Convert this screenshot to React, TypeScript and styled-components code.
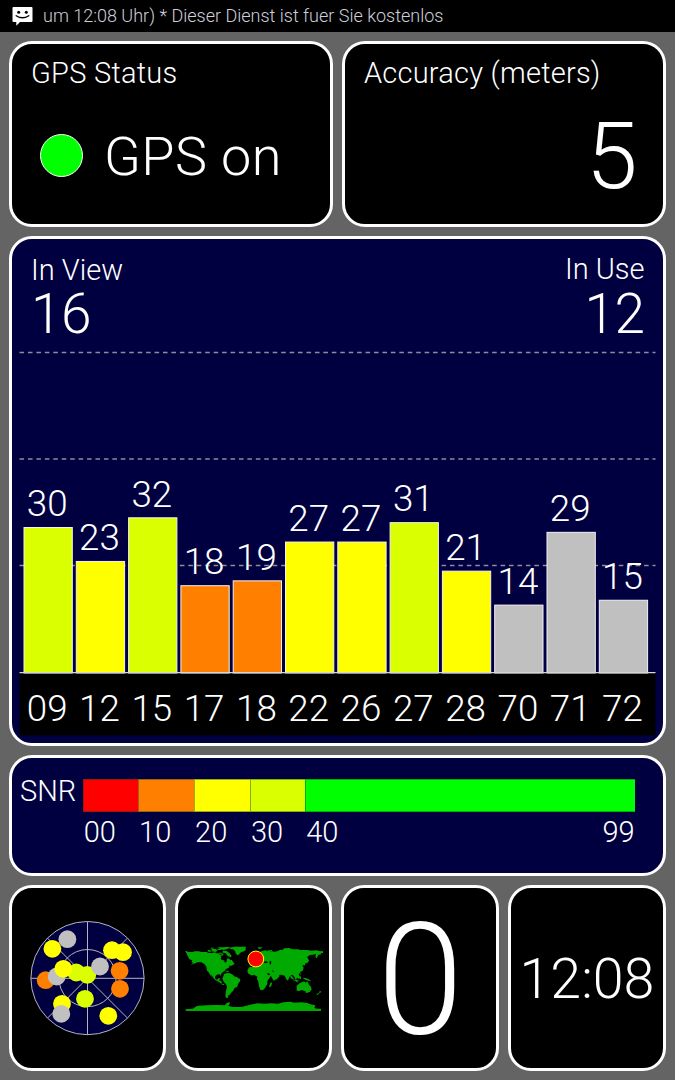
import React from "react";
import styled, { createGlobalStyle } from "styled-components";

const GlobalStyle = createGlobalStyle`
  * { box-sizing: border-box; }
  body {
    margin: 0;
    background: #646464;
    color: #fff;
    font-family: Roboto, "Liberation Sans", sans-serif;
    font-weight: 300;
  }
`;

const Screen = styled.div`
  width: 675px;
  height: 1080px;
  display: flex;
  flex-direction: column;
  overflow: hidden;
`;

const StatusBar = styled.header`
  height: 32px;
  flex: none;
  display: flex;
  align-items: center;
  gap: 10px;
  padding-left: 12px;
  background: #000;
  color: #cfcfdc;
  font-size: 18px;
  font-weight: 300;
  line-height: 32px;
  white-space: pre;
`;

const Dashboard = styled.main`
  flex: 1;
  display: grid;
  grid-template-rows: 186px 510px 121px 186px;
  gap: 9px;
  padding: 9px 9px 0 9px;
`;

const Row = styled.div<{ $columns: string }>`
  display: grid;
  grid-template-columns: ${(p) => p.$columns};
  gap: 9px;
`;

const Panel = styled.section<{ $tone?: "navy" | "black" }>`
  display: flex;
  flex-direction: column;
  overflow: hidden;
  border: 3px solid #fff;
  border-radius: 23px;
  background: ${(p) => (p.$tone === "navy" ? "#000040" : "#000")};
`;

const CenteredPanel = styled(Panel)<{ $drop?: number }>`
  align-items: center;
  justify-content: center;
  padding-top: ${(p) => p.$drop ?? 0}px;
`;

const Title = styled.h2<{ $spacing?: number }>`
  margin: 0;
  font-size: 29px;
  line-height: 28px;
  font-weight: 300;
  letter-spacing: ${(p) => p.$spacing ?? 0}px;
  white-space: nowrap;
`;

const StatusPanel = styled(Panel)`
  padding: 15px 19px 0;
`;

const FixRow = styled.div`
  display: flex;
  align-items: center;
  gap: 21px;
  margin-top: 41px;
  padding-left: 9px;
`;

const Lamp = styled.span`
  width: 43px;
  height: 43px;
  margin-bottom: 1px;
  border: 1.5px solid #fff;
  border-radius: 50%;
  background: #0f0;
`;

const Value = styled.div<{ $size: number; $spacing?: number }>`
  font-size: ${(p) => p.$size}px;
  line-height: ${(p) => p.$size}px;
  letter-spacing: ${(p) => p.$spacing ?? 0}px;
  white-space: nowrap;
`;

const FixValue = styled(Value)`
  padding-top: 2px;
`;

const Accuracy = styled(Value)`
  align-self: flex-end;
  margin: 23px 6.5px 0 0;
`;

const ChartHeader = styled.div`
  height: 110px;
  flex: none;
  display: flex;
  justify-content: space-between;
  padding: 17px 18.5px 0 19px;
`;

const Count = styled.div<{ $end?: boolean }>`
  display: flex;
  flex-direction: column;
  align-items: ${(p) => (p.$end ? "flex-end" : "flex-start")};
  gap: ${(p) => (p.$end ? 4 : 3)}px;
  margin-top: ${(p) => (p.$end ? -1 : 0)}px;
`;

const Chart = styled.svg`
  display: block;
  flex: none;
`;

const SnrPanel = styled(Panel)`
  flex-direction: row;
  padding: 21px 28.4px 0 8px;
  gap: 6px;
`;

const SnrTitle = styled(Title)`
  width: 57px;
  margin-top: -2px;
`;

const SnrScale = styled.div`
  flex: 1;
  display: grid;
  grid-template-columns: 55.4px 56px 55.8px 55.3px 1fr;
  grid-template-rows: 33px 34px;
  row-gap: 3px;
`;

const Swatch = styled.div<{ $color: string }>`
  background: ${(p) => p.$color};
  border: solid rgba(0, 60, 40, 0.4);
  border-width: 1px 0 1px 1px;
`;

const Tick = styled.div`
  display: flex;
  justify-content: space-between;
  padding-left: 0.7px;
  font-size: 29px;
  line-height: 34px;
`;

const ORANGE = "#ff8000";
const YELLOW = "#ffff00";
const LIME = "#d9ff00";
const GREEN = "#00ff00";
const GREY = "#c0c0c0";
const RED = "#ff0000";

const satellites = [
  { id: "09", snr: 30, color: LIME },
  { id: "12", snr: 23, color: YELLOW },
  { id: "15", snr: 32, color: LIME },
  { id: "17", snr: 18, color: ORANGE },
  { id: "18", snr: 19, color: ORANGE },
  { id: "22", snr: 27, color: YELLOW },
  { id: "26", snr: 27, color: YELLOW },
  { id: "27", snr: 31, color: LIME },
  { id: "28", snr: 21, color: YELLOW },
  { id: "70", snr: 14, color: GREY },
  { id: "71", snr: 29, color: GREY },
  { id: "72", snr: 15, color: GREY },
];

const scale = [
  { color: RED, from: "00" },
  { color: ORANGE, from: "10" },
  { color: YELLOW, from: "20" },
  { color: LIME, from: "30" },
  { color: GREEN, from: "40", to: "99" },
];

const BASE = 323.5;
const PITCH = 52.3;
const UNIT = 4.85;

function SignalChart() {
  return (
    <Chart width="651" height="394" viewBox="0 0 651 394">
      <rect x="7.5" y={BASE} width="636" height="63" fill="#000" />
      {[3.5, 110, 216.5].map((y) => (
        <line key={y} x1="7.5" x2="643.5" y1={y} y2={y} stroke="#8c8c9c" strokeWidth="1.5" strokeDasharray="4.6 3.84" />
      ))}
      {satellites.map((s, i) => {
        const x = 11.8 + i * PITCH;
        const top = BASE - s.snr * UNIT;
        return (
          <g key={s.id}>
            <rect x={x + 0.2} y={top + 0.5} width="48.3" height={s.snr * UNIT} fill={s.color} stroke="#f4f0f4" />
            <g fill="#fff" fontSize="36.3">
              <text x={x + 3} y={top - 10.8} textLength="40.8" lengthAdjust="spacingAndGlyphs">{s.snr}</text>
              <text x={x + 3} y="371.5" textLength="40.8" lengthAdjust="spacingAndGlyphs">{s.id}</text>
            </g>
          </g>
        );
      })}
      <line x1="7.5" x2="643.5" y1={BASE + 0.2} y2={BASE + 0.2} stroke="#d8d4dc" strokeWidth="1.3" />
    </Chart>
  );
}

const skyDots: [number, number, string][] = [
  [67.4, 939.4, GREY],
  [52.4, 949, YELLOW],
  [112, 950.4, YELLOW],
  [123, 952.4, YELLOW],
  [45.7, 980.4, ORANGE],
  [56.7, 976.7, GREY],
  [76.3, 972.7, LIME],
  [63.3, 969, YELLOW],
  [87.3, 975, LIME],
  [100, 966.7, GREY],
  [119.6, 971, ORANGE],
  [120, 989, ORANGE],
  [85, 999, LIME],
  [62, 1004, YELLOW],
  [61.3, 1014, GREY],
  [108.3, 1016, YELLOW],
];

function SkyView() {
  return (
    <svg width="116" height="116" viewBox="30 920.2 116 116">
      <g stroke="#b4b4c0" strokeWidth="1" fill="none">
        <circle cx="87.5" cy="978.3" r="56.6" fill="#000040" />
        <circle cx="87.5" cy="978.3" r="28.6" />
        <path d="M31 978.5H144M87.5 922V1035M47.5 938.3l80 80M127.5 938.3l-80 80" />
      </g>
      {skyDots.map(([x, y, color]) => (
        <circle key={`${x}-${y}`} cx={x} cy={y} r="8.9" fill={color} />
      ))}
    </svg>
  );
}

function WorldMap() {
  return (
    <svg width="138" height="66" viewBox="46 46 414 198">
      <g fill="#00aa00">
        {/* North America and the Arctic islands */}
        <path d="M47 64h6v3h16l6-2h12l9 2h15l6 3h12l6-2 6 3h6l3 3h-3l6 3 6-6 3 4-6 6-3 6 3 3 9 3v6l6-3v-8l6-2 6 6 3-2 6 9 3 3-9 6h-9l3 4-6 4-6 3-3 5-6 4-4 4-2 6-3-4-9 1-5 6 1 7 6 2 3-4h5l-2 7 6 1 1 8 6 1 3 2-6 1-6-5-9-6-9-5-6-9-6-7 3 8-4-5-5-9-5-5-2-12-6-8-9-5h-12l-12 5-9 2 9-5-6-3 3-5-9-3z" />
        <path d="M113 61h9l3 5h-9zM126 58h12l6 4-6 5-12-2zM141 57h12l3 3-9 2zM144 53h15l12-1 12 1-9 4-12 4-9-3zM159 63l12 1 9 7 6 8-3 4-9-4-6-8-9-2zM147 69h9v5h-6zM123 54h9v3h-9z" />
        <path d="M180 54l15-3h36l-4 4 2 5-6 5-9 3-9 9-6-4-3-9-6-5-10-1z" />
        <path d="M149 119l9-2 9 5-6 1zM168 123h9v3h-9z" />
        {/* South America */}
        <path d="M163 133l9-3 9 1 9 4 3 5 9 3 10 6-1 6-6 8-2 8-8 4-5 9-6 5-3 6-5 2-2 8h-4l-3-6 2-16 3-11-3-8-7-8-4-9 3-7z" />
        {/* Europe and Asia */}
        <path d="M248 109l-8-1v-10l8-1-2-5 8-5 6-5 9-2-3-6 9-9 12-3 9 4 12-1 6 1 9-1 9-5 6 1 6-5 15-1 9 4h18l6 2h21l12 2 15-1 12 3 10-1v6l-9 1 2 3-9 2-5 10-4-4 2-9-9 2-9 1-9 6 3 4 3 8-6 7-5-1-1 8-4-3-4 2 4 7-3 9-9 5-3 6 4 7-4 7-6-6-2 5 7 12-6-3-6-15-6-6-6 3-4 6-3 9-5-4-5-11-10-3-7 1 2 3-8 9-10 5-10-17-4-5h-12l-6-4-6 5-6-6-9 3z" />
        <path d="M235 89l5-8 3 3 2 7-7 2zM264 53h12l3 2-12 3zM292 64l6-2 9-1v3l-12 4zM400 98l5-2 3 5-6 6-6-1z" />
        {/* Africa */}
        <path d="M238 113l18-2 3 4 12 1h15l3 8 6 12 10-1-6 11-6 8v9l-5 8-5 8-6 3-5-1-4-11-2-14-4-9 1-6-9-5-10 1-9-6-2-8z" />
        <path d="M302 160l5-2-1 8-4 7-4-2z" />
        {/* South-east Asia and Oceania */}
        <path d="M360 136l6 3 8 10-3 1-8-6zM376 138l6-6 4 6-3 8-6 2zM372 151l12 1 6 2-3 1-14-2zM388 141l6-1v8l-4 1zM388 125l3 1 3 9-4-2zM398 144l9 1 9 3 9 6-9-1-9-3zM401 92h3v8h-3z" />
        <path d="M381 168l9-7 6-3 8-3 3 4 6-4 4 9 7 8 2 7-5 7-8 3-8-5-9-3-7 3-8-1z" />
        <path d="M408 186h6v3h-6zM449 185h5v3l-5 3-5 5h-4l3-4 6-3z" />
        {/* Antarctica */}
        <path d="M70 237l10-7 7-2 24-1 30-1 25 1 3-5 5-3 6-2v7l-5 4 15 4 25 0 15-4 12-3 21-4 21 1 21-1 21 1 15-4 21-2 12 3 21-1 18 2 9 4 12 2 3 2-3 6 6 3h14v8H48v-6z" />
      </g>
      {/* Inland seas */}
      <path d="M153 79l9-3 4 7 5 3-1 7-5-6-9-2zM281 96l9-1 5 4-9 2zM300 94l5 1-1 9h-4zM307 121l7 5h-5z" fill="#000" />
      <circle cx="258.5" cy="88" r="23.7" fill="#f00" stroke="#ff0" strokeWidth="3" />
    </svg>
  );
}

function MessageIcon() {
  return (
    <svg width="21" height="20" viewBox="0 0 21 20">
      <path d="M1.5 1h18a1 1 0 0 1 1 1v13a1 1 0 0 1-1 1H8l-3.7 3.7V16H1.5a1 1 0 0 1-1-1V2a1 1 0 0 1 1-1z" fill="#fff" />
      <circle cx="6.7" cy="6.2" r="1.5" />
      <circle cx="14.3" cy="6.2" r="1.5" />
      <path d="M4.2 9.7Q10.5 13.8 16.8 9.7" stroke="#000" strokeWidth="1.3" fill="none" strokeLinecap="round" />
    </svg>
  );
}

export default function App() {
  return (
    <>
      <GlobalStyle />
      <Screen>
        <StatusBar>
          <MessageIcon />
          <span>um 12:08 Uhr) * Dieser Dienst ist fuer Sie kostenlos</span>
        </StatusBar>
        <Dashboard>
          <Row $columns="1fr 1fr">
            <StatusPanel>
              <Title $spacing={0.25}>GPS Status</Title>
              <FixRow>
                <Lamp />
                <FixValue $size={54} $spacing={0.4}>GPS on</FixValue>
              </FixRow>
            </StatusPanel>
            <StatusPanel>
              <Title $spacing={0.22}>Accuracy (meters)</Title>
              <Accuracy $size={93}>5</Accuracy>
            </StatusPanel>
          </Row>
          <Panel $tone="navy">
            <ChartHeader>
              <Count>
                <Title>In View</Title>
                <Value $size={55} $spacing={-0.5}>16</Value>
              </Count>
              <Count $end>
                <Title>In Use</Title>
                <Value $size={55} $spacing={-0.5}>12</Value>
              </Count>
            </ChartHeader>
            <SignalChart />
          </Panel>
          <SnrPanel $tone="navy">
            <SnrTitle>SNR</SnrTitle>
            <SnrScale>
              {scale.map((s) => (
                <Swatch key={s.from} $color={s.color} />
              ))}
              {scale.map((s) => (
                <Tick key={s.from}>
                  <span>{s.from}</span>
                  {s.to && <span>{s.to}</span>}
                </Tick>
              ))}
            </SnrScale>
          </SnrPanel>
          <Row $columns="157px 157.4px 157.6px 158px">
            <CenteredPanel>
              <SkyView />
            </CenteredPanel>
            <CenteredPanel>
              <WorldMap />
            </CenteredPanel>
            <CenteredPanel $drop={5}>
              <Value $size={155}>0</Value>
            </CenteredPanel>
            <CenteredPanel $drop={4}>
              <Value $size={55.5}>12:08</Value>
            </CenteredPanel>
          </Row>
        </Dashboard>
      </Screen>
    </>
  );
}
